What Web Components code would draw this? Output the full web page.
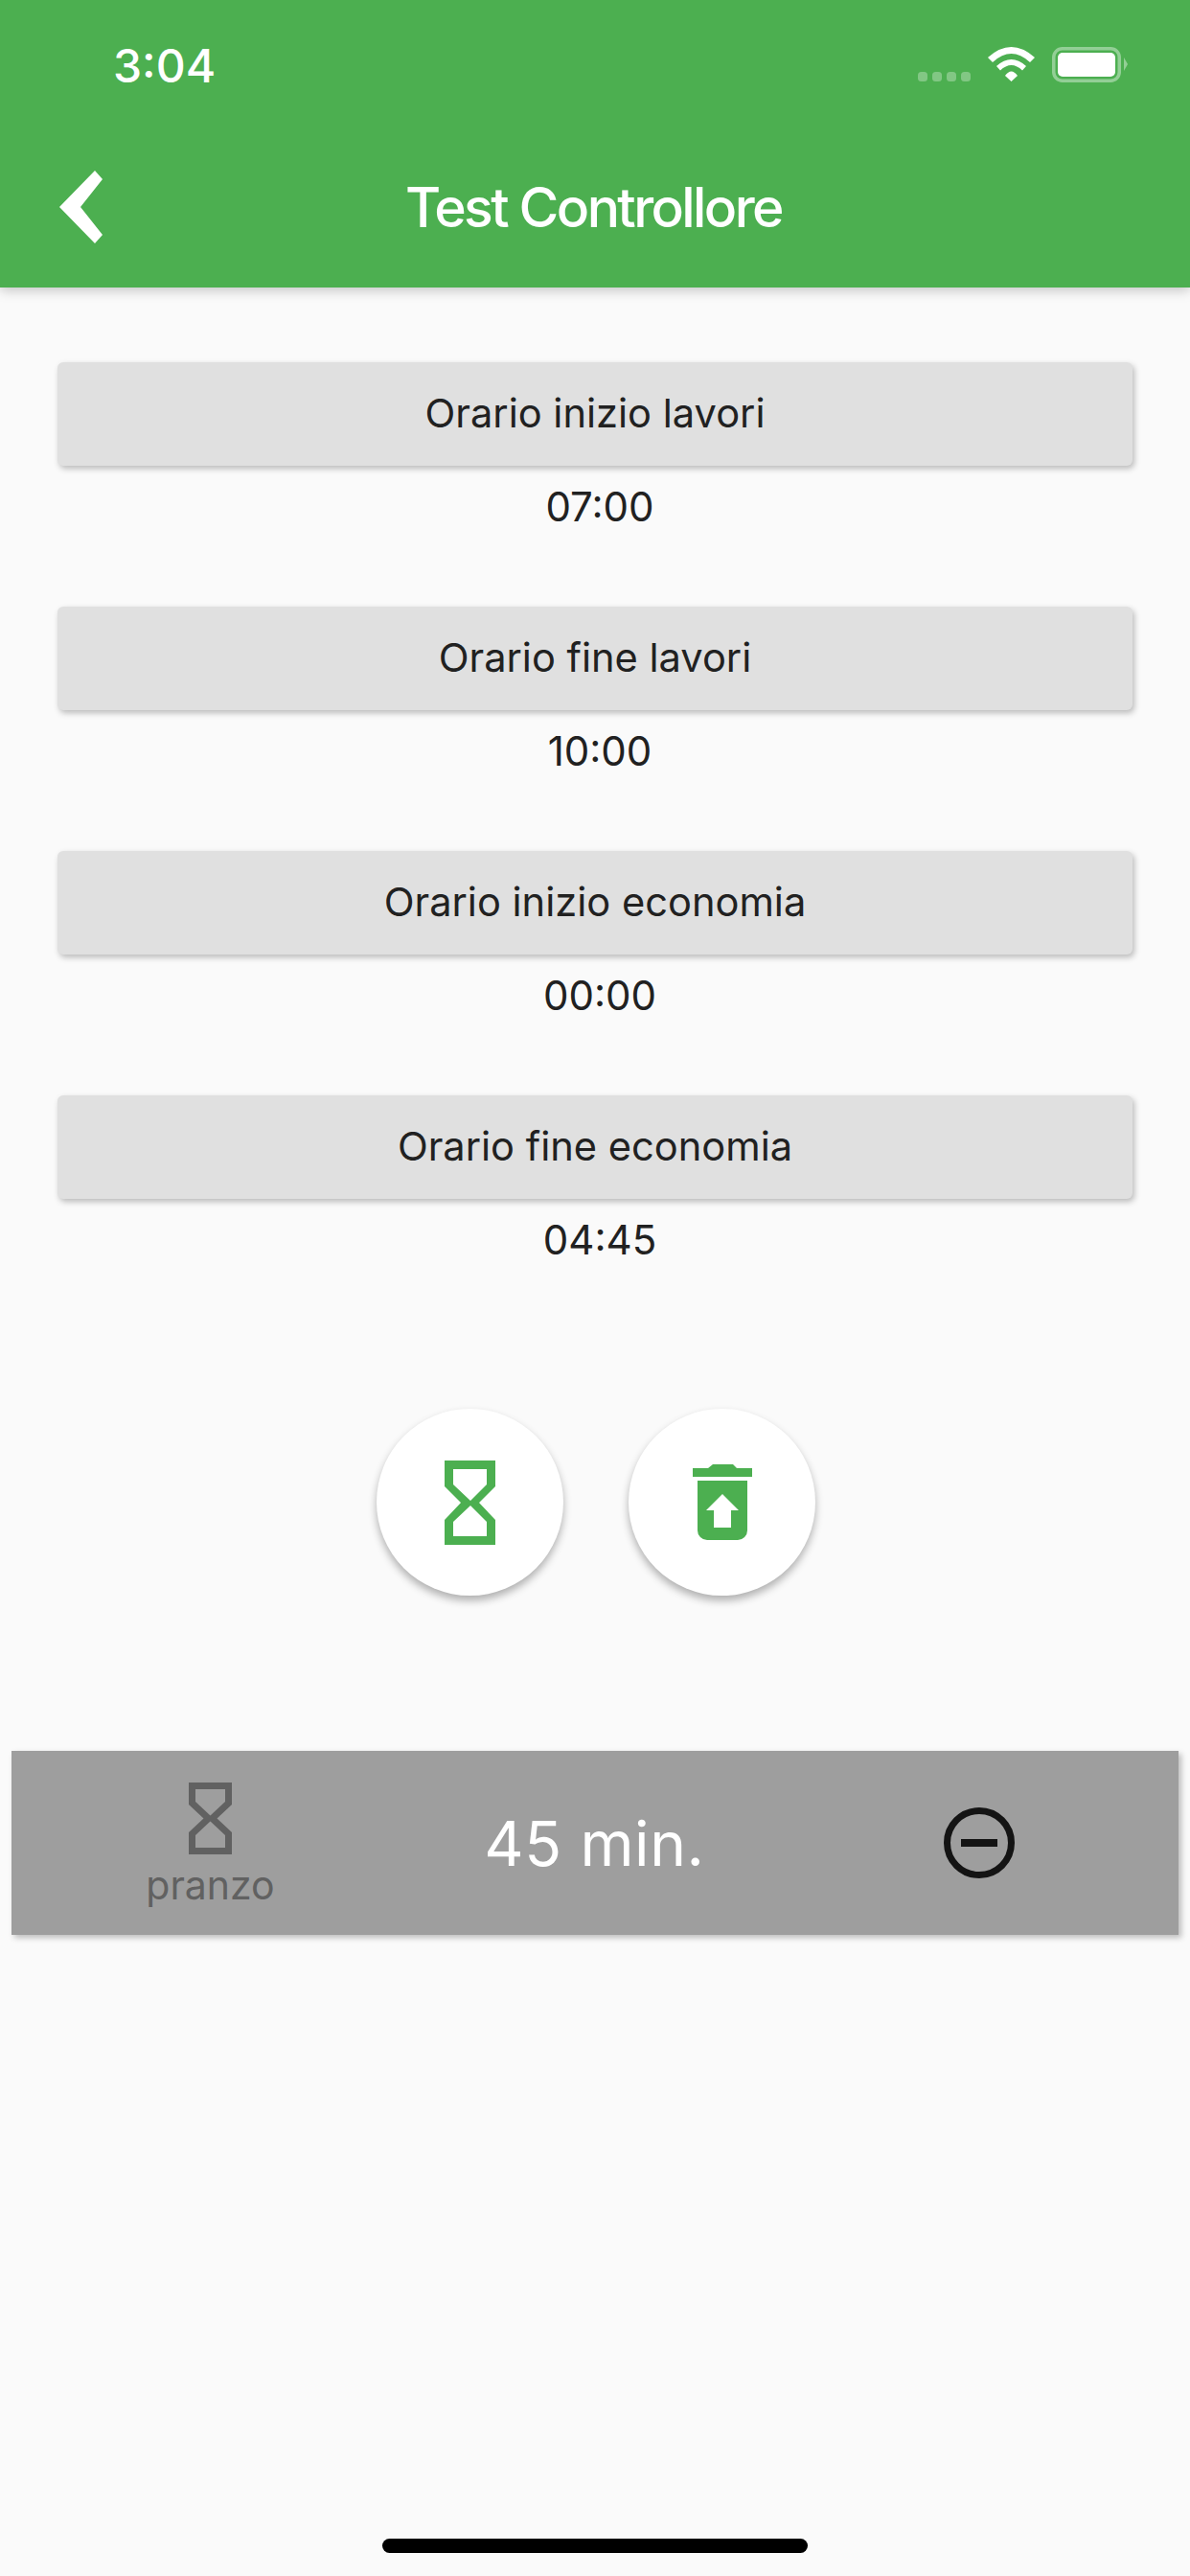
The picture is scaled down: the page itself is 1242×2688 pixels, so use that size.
<!DOCTYPE html>
<html><head><meta charset="utf-8">
<style>
html,body{margin:0;padding:0;background:#fafafa;font-family:Inter,"Liberation Sans",sans-serif;}
body{width:1242px;height:2688px;overflow:hidden;display:flex;flex-direction:column;}
</style></head><body>
<app-header title-text="Test Controllore" time="3:04"></app-header>
<time-list>
<time-row label="Orario inizio lavori" value="07:00"></time-row>
<time-row label="Orario fine lavori" value="10:00"></time-row>
<time-row label="Orario inizio economia" value="00:00"></time-row>
<time-row label="Orario fine economia" value="04:45"></time-row>
</time-list>
<fab-row>
<round-fab><svg width="53" height="88" viewBox="0 0 53 88" style="display:block"><path fill="#4caf50" fill-rule="evenodd" d="M0 0H53V27L36 44L53 62V88H0V62L17 44L0 27ZM9 9V25L27 42L44 25V9ZM27 47L9 64V79H44V64Z"/></svg></round-fab>
<round-fab><svg width="62" height="79" viewBox="0 0 62 79" style="display:block"><path fill="#4caf50" d="M0 4H16L21 0H42L46 4H62V13H0ZM5 17H57V69A10 10 0 0 1 47 79H15A10 10 0 0 1 5 69Z"/><path fill="#fff" d="M31 31L48 48H40V66H22V48H14Z"/></svg></round-fab>
</fab-row>
<lunch-bar></lunch-bar>
<home-bar></home-bar>
<script>
function def(name,css,html){
  customElements.define(name,class extends HTMLElement{
    connectedCallback(){
      if(this.shadowRoot)return;
      const a=n=>this.getAttribute(n)||'';
      const r=this.attachShadow({mode:'open'});
      r.innerHTML='<style>'+css+'</style>'+(typeof html==='function'?html(a):html);
    }
  });
}
def('app-header',`
:host{display:block;height:300px;background:#4caf50;color:#fff;box-shadow:0 3px 12px rgba(0,0,0,.22);position:relative;z-index:2;font-family:Inter,"Liberation Sans",sans-serif;flex:none}
.status{height:128px;display:flex;align-items:flex-start;justify-content:space-between;padding:45px 60px 0 118px;box-sizing:border-box}
.time{font-size:48px;font-weight:500;line-height:48px;letter-spacing:0}
.nav{height:172px;display:grid;grid-template-columns:172px 1fr 172px;align-items:center}
.back{padding-left:62px;margin-top:4px}
h1{margin:4px 3px 0 0;text-align:center;font-size:57px;font-weight:500;letter-spacing:-2.600px;line-height:1}
`,a=>`<div class="status"><span class="time">${a('time')}</span>
<svg width="232" height="45" viewBox="0 0 232 45" style="display:block"><g fill="#fff" fill-opacity=".3"><rect x="8" y="30" width="10" height="10" rx="3.5"/><rect x="23" y="30" width="10" height="10" rx="3.5"/><rect x="38" y="30" width="10" height="10" rx="3.5"/><rect x="53" y="30" width="10" height="10" rx="3.5"/></g>
<path fill="#fff" d="M81 15Q105.500 -7 130 15L125 20Q105.500 2 86 20ZM90 24Q105.500 10 121 24L117 28.500Q105.500 17.500 94 28.500ZM99 34Q105.500 25 112 34L105.500 40Z"/>
<rect x="149.750" y="5.750" width="68.500" height="33.500" rx="9" fill="none" stroke="#fff" stroke-opacity=".4" stroke-width="3.500"/><rect x="154" y="10" width="60" height="25" rx="5" fill="#fff"/><path d="M223 15L227 22L223 29Z" fill="#fff" fill-opacity=".4"/></svg></div>
<div class="nav"><div class="back"><svg width="45" height="76" viewBox="0 0 45 76" style="display:block"><path fill="#fff" d="M37 0L45 9L22 38L45 67L37 76L0 38Z"/></svg></div><h1>${a('title-text')}</h1><div></div></div>`);
def('time-list',`:host{display:flex;flex-direction:column;gap:56px;padding:78px 60px 0;flex:none}`,`<slot></slot>`);
def('time-row',`
:host{display:flex;flex-direction:column;align-items:stretch;height:199px;font-family:Inter,"Liberation Sans",sans-serif}
.btn{height:108px;background:#e0e0e0;border-radius:6px;box-shadow:2px 3px 6px rgba(0,0,0,.26);display:flex;align-items:center;justify-content:center;font-size:41.600px;color:#212121;line-height:1;box-sizing:border-box}
.val{text-align:center;font-size:42px;color:#212121;margin-top:21px;line-height:44px;padding-left:10px}
`,a=>`<div class="btn">${a('label')}</div><div class="val">${a('value')}</div>`);
def('fab-row',`:host{display:flex;justify-content:center;gap:68px;padding:128px 0 0 2px;flex:none}`,`<slot></slot>`);
def('round-fab',`:host{display:flex;align-items:center;justify-content:center;width:195px;height:195px;border-radius:50%;background:#fff;box-shadow:0 5px 9px rgba(0,0,0,.3);flex:none}`,`<slot></slot>`);
def('lunch-bar',`
:host{display:grid;grid-template-columns:415px 1fr 416px;align-items:center;height:192px;margin:162px 12px 0;background:#9e9e9e;box-shadow:3px 3px 6px rgba(0,0,0,.25);font-family:Inter,"Liberation Sans",sans-serif;flex:none}
.a{display:flex;flex-direction:column;align-items:center;color:#616161;font-size:41px;line-height:44px;align-self:start;padding-top:33px}
.a svg{display:block;margin-bottom:10px}
.m{text-align:center;color:#fff;font-size:64px;letter-spacing:.6px}
.c{display:flex;justify-content:center}
`,`<div class="a"><svg width="45" height="75" viewBox="0 0 45 75"><path fill="#616161" fill-rule="evenodd" d="M0 0H45V23L29.500 37.500L45 52V75H0V52L15.500 37.500L0 23ZM7 7V20L22.500 34.500L38 20V7ZM22.500 40.500L7 55V68H38V55Z"/></svg><span>pranzo</span></div><div class="m">45 min.</div><div class="c"><svg width="74" height="74" viewBox="0 0 74 74" style="display:block"><circle cx="37" cy="37" r="33.500" fill="none" stroke="#141414" stroke-width="7"/><rect x="18" y="33" width="38" height="8" fill="#141414"/></svg></div>`);
def('home-bar',`:host{display:block;flex:none;width:444px;height:15px;margin:630px 0 0 399px;border-radius:8px;background:#000}`,``);
</script>
</body></html>
